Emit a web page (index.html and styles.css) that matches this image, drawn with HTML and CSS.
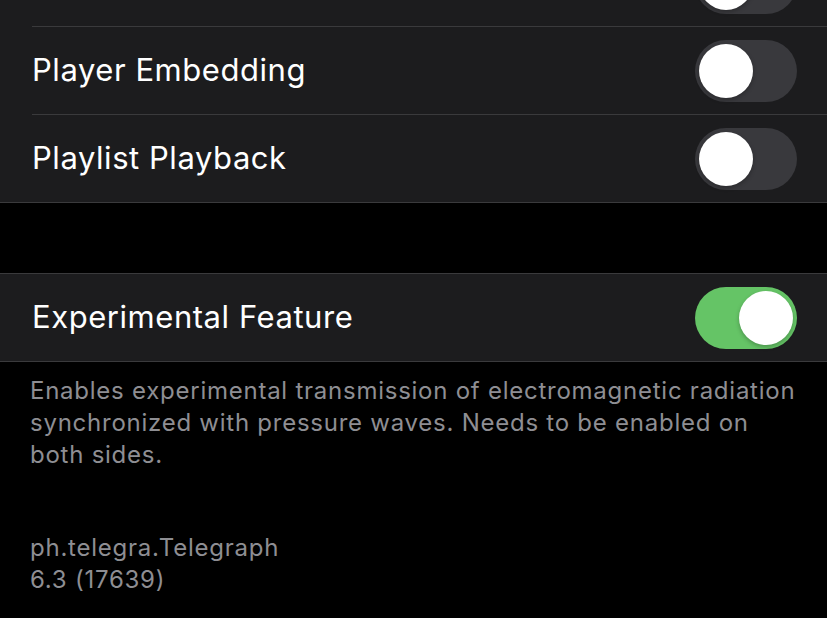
FILE: index.html
```html
<!DOCTYPE html>
<html>
<head>
<meta charset="utf-8">
<link rel="stylesheet" href="styles.css">
</head>
<body>
<div class="screen">
  <div class="group group-top">
    <div class="row">
      <span class="label"></span>
      <span class="toggle"><span class="knob"></span></span>
    </div>
    <div class="row">
      <span class="label">Player Embedding</span>
      <span class="toggle"><span class="knob"></span></span>
    </div>
    <div class="row">
      <span class="label">Playlist Playback</span>
      <span class="toggle"><span class="knob"></span></span>
    </div>
  </div>

  <div class="group group-second">
    <div class="row">
      <span class="label">Experimental Feature</span>
      <span class="toggle on"><span class="knob"></span></span>
    </div>
  </div>

  <p class="footer">Enables experimental transmission of electromagnetic radiation synchronized with pressure waves. Needs to be enabled on both sides.</p>

  <p class="version">ph.telegra.Telegraph<br>6.3 (17639)</p>
</div>
</body>
</html>
```

FILE: styles.css
```css
html, body {
  margin: 0;
  padding: 0;
  background: #000;
}

body {
  font-family: Inter, "Noto Sans", "Liberation Sans", sans-serif;
  width: 827px;
  height: 618px;
  overflow: hidden;
}

.screen {
  display: flex;
  flex-direction: column;
}

.group {
  background: #1c1c1e;
  border-top: 1px solid #3a3a3c;
  border-bottom: 1px solid #3a3a3c;
}

.group-top {
  margin-top: -62px;
}

.group-second {
  margin-top: 70px;
}

.row {
  height: 87px;
  display: flex;
  align-items: center;
  justify-content: space-between;
  padding: 0 30px 0 32px;
}

.row + .row {
  border-top: 1px solid #3a3a3c;
  margin-left: 32px;
  padding-left: 0;
}

.label {
  color: #ffffff;
  font-size: 31px;
  letter-spacing: 0.55px;
  margin-top: -2px;
}

.toggle {
  width: 102px;
  height: 62px;
  border-radius: 31px;
  background: #39393d;
  display: flex;
  align-items: center;
  padding: 0 4px;
  box-sizing: border-box;
}

.knob {
  width: 54px;
  height: 54px;
  border-radius: 50%;
  background: #ffffff;
  box-shadow: 0 2px 4px rgba(0, 0, 0, 0.25);
}

.toggle.on {
  background: #65c466;
  justify-content: flex-end;
}

.footer {
  margin: 0;
  padding: 13px 18px 0 30px;
  color: #8e8e93;
  font-size: 24px;
  letter-spacing: 0.75px;
  line-height: 32px;
}

.version {
  margin: 61px 0 0 0;
  padding: 0 30px;
  color: #8e8e93;
  font-size: 24px;
  letter-spacing: 0.75px;
  line-height: 32px;
}
```
